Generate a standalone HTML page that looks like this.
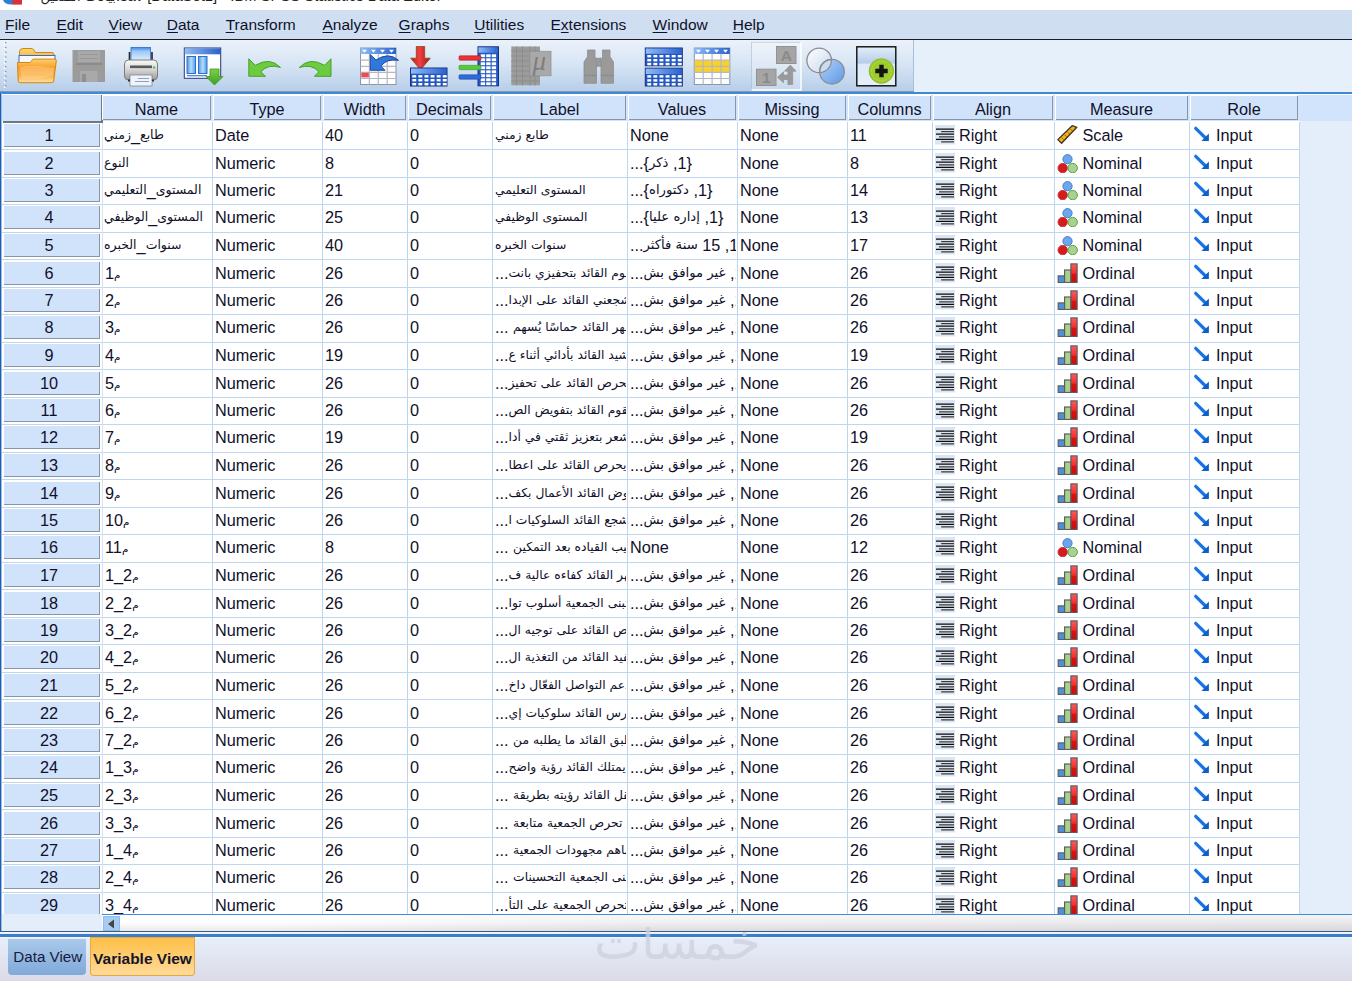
<!DOCTYPE html>
<html lang="en">
<head>
<meta charset="utf-8">
<title>IBM SPSS Statistics Data Editor</title>
<style>
html,body{margin:0;padding:0;}
body{width:1352px;height:981px;overflow:hidden;position:relative;background:#e4eefb;font-family:"Liberation Sans","DejaVu Sans",sans-serif;font-size:16.25px;color:#10102a;}
.abs{position:absolute;}
#title{position:absolute;left:0;top:0;width:1352px;height:10px;background:#fff;overflow:hidden;}
#title>span{position:absolute;left:31px;top:-13px;transform:translateY(-.4px);font-size:14.7px;line-height:17px;color:#000;white-space:nowrap;}
#title .ta{font-family:"DejaVu Sans",sans-serif;font-size:14.3px;position:static;}
#menu{position:absolute;left:0;top:10px;width:1352px;height:29px;background:#cfdff1;}
#menu span{position:absolute;top:5px;font-size:15.5px;line-height:20px;color:#10102a;white-space:nowrap;}
#menu u{text-decoration:underline;text-underline-offset:2px;}
#mline{position:absolute;left:0;top:38.5px;width:1352px;height:1.5px;background:#1c1c24;}
#tb{position:absolute;left:0;top:40px;width:913px;height:51px;background:linear-gradient(#ebf2fa,#d6e4f4 50%,#b7cee9);border-right:1px solid #a9bfd9;}
#tbr{position:absolute;left:914px;top:40px;width:438px;height:52px;background:#e6f0fb;}
#tbl1{position:absolute;left:0;top:91px;width:914px;height:1px;background:#8599b0;}
#tbl2{position:absolute;left:0;top:91.700px;width:1352px;height:2.200px;background:#3f87d8;}
#lbar{position:absolute;left:0;top:93px;width:1px;box-shadow:1px 0 0 #9dbde6;height:842px;background:#1d5fae;}
#gridbg{position:absolute;left:2px;top:94px;width:1298px;height:821px;background:#fff;}
#hband{position:absolute;left:2px;top:94px;width:1350px;height:27px;background:#d2e4fb;border-top:1px solid #fff;box-sizing:border-box;}
#corner{position:absolute;left:3px;top:95px;width:98px;height:26px;background:#d0e3fb;border-right:2px solid #6d7884;border-bottom:2px solid #6d7884;box-sizing:content-box;}
.hc{position:absolute;top:95px;height:25px;line-height:28px;text-align:center;background:#d0e3fb;box-shadow:inset 1px 1px 0 #fff, inset -1px -1px 0 #8795a5;font-size:16.25px;}
.row{position:absolute;left:0;width:1352px;}
.rh{position:absolute;left:3px;top:1px;width:97px;padding-right:5px;box-sizing:border-box;text-align:center;background:#d0e3fb;box-shadow:inset 1px 1px 0 #fff, inset -1px -1px 0 #8795a5;}
.c{position:absolute;top:0;height:100%;line-height:27px;white-space:nowrap;overflow:hidden;padding-left:2px;box-sizing:border-box;}
.ar{font-family:"DejaVu Sans",sans-serif;font-size:12.3px;position:relative;top:-2px;}
.nm .ar{font-size:12.5px;}
.vv .ar{font-size:13.2px;}
.mm{font-family:"DejaVu Sans",sans-serif;font-size:10.5px;position:relative;top:-1px;}
.nn{margin-left:1px;}
.rtl{display:inline-block;direction:rtl;unicode-bidi:isolate;white-space:nowrap;}
.hl{position:absolute;left:2px;width:1298px;height:1px;background:#bfd6f0;}
.vl{position:absolute;top:122px;width:1px;height:793px;background:#bfd6f0;}
.ic{position:absolute;}
.al{left:2px;top:3px;}
.t2{position:absolute;left:26px;}
.ms{left:1px;top:3px;}
.t3{position:absolute;left:27.5px;}
.rl{left:2px;top:4px;}
.t4{position:absolute;left:26px;}
#hsrow{position:absolute;left:2px;top:914px;width:1350px;height:19px;background:#e4eefb;}
#hstrack{position:absolute;left:102px;top:914px;width:1250px;height:17px;background:linear-gradient(rgba(255,255,255,.55),rgba(255,255,255,0) 45%,rgba(120,120,135,.16)),linear-gradient(to right,#fff 0,#fff 14%,#f1f1f3 40%,#e9e9ec 100%);border-top:1.5px solid #3d8be0;box-sizing:border-box;}
#hsbtn{position:absolute;left:103px;top:916px;width:17px;height:15px;background:#a8cbf2;box-shadow:inset 0 0 0 1px #8fbcf0;}
#bl1{position:absolute;left:0;top:931px;width:1352px;height:3px;background:linear-gradient(#3e5a78 0,#3e5a78 36%,#f4f8fd 37%,#e4eefa 100%);}
#bl2{position:absolute;left:0;top:934px;width:1352px;height:4px;background:linear-gradient(#3a7dca 0,#3a7dca 72%,#f2f6fc 73%);}
#bottom{position:absolute;left:0;top:938px;width:1352px;height:43px;background:linear-gradient(#e7eef9,#e2e6f2 40%,#dbdbe7);}
#tab1{position:absolute;left:7.500px;top:939px;width:78.500px;height:36px;border-radius:0 0 4px 4px;background:linear-gradient(#aac9ea,#7faad8);font-size:15.200px;line-height:36px;text-align:center;color:#1a1a40;padding-left:2px;box-sizing:border-box;}
#tab2{position:absolute;left:90px;top:937px;width:105px;height:39px;border-radius:0 0 4px 4px;background:linear-gradient(#ffbe45,#ffdb9b);font-size:15.5px;font-weight:bold;line-height:43px;text-align:center;color:#15152a;box-shadow:inset 0 0 0 1px #e9a83a;}
#wmc{position:absolute;left:580px;top:927px;width:200px;height:54px;overflow:hidden;}
#wm{position:absolute;left:14px;top:-15px;width:164px;text-align:center;font-family:"DejaVu Sans",sans-serif;font-size:50px;line-height:60px;font-weight:normal;color:#cdd0de;opacity:.75;white-space:nowrap;}
</style>
</head>
<body>
<svg width="0" height="0" style="position:absolute">
<defs>
<linearGradient id="gOrd" x1="0" y1="0" x2="0" y2="1"><stop offset="0" stop-color="#ff5a5a"/><stop offset=".5" stop-color="#ee3030"/><stop offset=".55" stop-color="#d81414"/><stop offset="1" stop-color="#cc0c0c"/></linearGradient>
<g id="i-al"><rect x="0" y="0" width="20" height="19.5" fill="#dce6f3"/><g stroke-width="1.25"><path d="M1 4.1H19M1 9.200H19M1 14.300H19" stroke="#0a0a0a"/><path d="M6.200 6.650H19M4 11.750H19M6.200 16.850H19" stroke="#3a3a3a"/></g></g>
<g id="i-scale"><path d="M1.800 14.600L16.200 .700L20.800 2.300L5.600 18.300z" fill="#f2b21e" stroke="#3a3226" stroke-width="1.300" stroke-linejoin="round"/><path d="M5.500 12.500l2 2M8.500 9.700l2 2M11.500 6.900l2 2M14.500 4.100l2 2" stroke="#7a5a10" stroke-width=".9"/></g>
<g id="i-nominal"><circle cx="11.500" cy="6.200" r="4.600" fill="#6fa6ea" stroke="#3f7fd4" stroke-width="1"/><circle cx="6.700" cy="15.100" r="4.700" fill="#d81a1e" stroke="#c03a3a" stroke-width="1"/><circle cx="16.700" cy="15.100" r="4.700" fill="#a9d192" stroke="#58a23a" stroke-width="1"/></g>
<g id="i-ordinal"><rect x="2.200" y="12.900" width="6.600" height="6.600" fill="#4c92da" stroke="#5e5e62" stroke-width="1.200"/><rect x="8.600" y="7" width="6.400" height="12.500" fill="#a9d18a" stroke="#5e5e62" stroke-width="1.200"/><rect x="14.900" y=".900" width="6.200" height="18.600" fill="url(#gOrd)" stroke="#5e5e62" stroke-width="1.200"/></g>
<g id="i-in"><path d="M3.700 2.300L12.500 11" stroke="#1874e6" stroke-width="3.200" stroke-linecap="round"/><path d="M16.900 7.600V15.100H9.400z" fill="#0f5fc4"/></g>
</defs>
</svg>
<div id="title"><svg width="24" height="6" viewBox="0 0 24 6" style="position:absolute;left:0;top:0"><path d="M3 0Q5 5 13 4.500V0z" fill="#2d7fd0"/><rect x="12.500" y="0" width="9.500" height="4.600" fill="#d8303c"/></svg><svg width="600" height="10" viewBox="0 0 600 10" style="position:absolute;left:0;top:0"><text x="116" y="0.600" text-anchor="end" font-family="DejaVu Sans, sans-serif" font-size="13" fill="#222">بيانات التمكين</text><text x="116" y="0.600" font-family="Liberation Sans, sans-serif" font-size="14.800" fill="#222">.sav [DataSet1] - IBM SPSS Statistics Data Editor</text></svg></div>
<div id="menu">
<span style="left:5.1px"><u>F</u>ile</span>
<span style="left:56.4px"><u>E</u>dit</span>
<span style="left:108.6px"><u>V</u>iew</span>
<span style="left:166.7px"><u>D</u>ata</span>
<span style="left:225.7px"><u>T</u>ransform</span>
<span style="left:322.5px"><u>A</u>nalyze</span>
<span style="left:398.6px"><u>G</u>raphs</span>
<span style="left:474.2px"><u>U</u>tilities</span>
<span style="left:550.5px">E<u>x</u>tensions</span>
<span style="left:652.6px"><u>W</u>indow</span>
<span style="left:732.8px"><u>H</u>elp</span>
</div>
<div id="mline"></div>
<div id="tb"></div>
<!--TB-->
<svg id="tbsvg" width="914" height="52" viewBox="0 40 914 52" style="position:absolute;left:0;top:40px">
<defs>
<linearGradient id="gFold" x1="0" y1="0" x2="0" y2="1"><stop offset="0" stop-color="#ffcf72"/><stop offset=".35" stop-color="#f9a02a"/><stop offset=".7" stop-color="#fbb040"/><stop offset="1" stop-color="#ffe2a4"/></linearGradient>
<linearGradient id="gFoldB" x1="0" y1="0" x2="0" y2="1"><stop offset="0" stop-color="#ffd873"/><stop offset="1" stop-color="#f2a224"/></linearGradient>
<linearGradient id="gHdr" x1="0" y1="0" x2="1" y2="0"><stop offset="0" stop-color="#8fbdf6"/><stop offset="1" stop-color="#2a62cc"/></linearGradient>
<linearGradient id="gHdr2" x1="0" y1="0" x2="0" y2="1"><stop offset="0" stop-color="#2a62d0"/><stop offset="1" stop-color="#8cbcf8"/></linearGradient>
<linearGradient id="gPan" x1="0" y1="0" x2="1" y2="0"><stop offset="0" stop-color="#4f9ae8"/><stop offset=".5" stop-color="#b5dcf8"/><stop offset="1" stop-color="#4f9ae8"/></linearGradient>
<linearGradient id="gGreen" x1="0" y1="0" x2="0" y2="1"><stop offset="0" stop-color="#7ed04a"/><stop offset="1" stop-color="#3f9e22"/></linearGradient>
<linearGradient id="gRed" x1="0" y1="0" x2="1" y2="0"><stop offset="0" stop-color="#b81c1c"/><stop offset=".45" stop-color="#f04040"/><stop offset="1" stop-color="#a41414"/></linearGradient>
<linearGradient id="gPrn" x1="0" y1="0" x2="0" y2="1"><stop offset="0" stop-color="#fafafa"/><stop offset=".5" stop-color="#d4d4d4"/><stop offset="1" stop-color="#9a9a9a"/></linearGradient>
<linearGradient id="gPap" x1="0" y1="0" x2="0" y2="1"><stop offset="0" stop-color="#3f8be8"/><stop offset=".25" stop-color="#9cc8f6"/><stop offset="1" stop-color="#eef6fe"/></linearGradient>
<linearGradient id="gC1" x1="0" y1="0" x2="1" y2="1"><stop offset="0" stop-color="#ffffff"/><stop offset="1" stop-color="#c4d8f0"/></linearGradient>
<linearGradient id="gC2" x1="0" y1="0" x2="1" y2="1"><stop offset="0" stop-color="#b4d2f6"/><stop offset="1" stop-color="#5c98e8"/></linearGradient>
<linearGradient id="gBox" x1="0" y1="0" x2="0" y2="1"><stop offset="0" stop-color="#e4eefa"/><stop offset=".42" stop-color="#b4cdea"/><stop offset=".44" stop-color="#dde9f8"/><stop offset="1" stop-color="#e6f0fb"/></linearGradient>
</defs>
<!-- grip -->
<g fill="#8c9cb0">
<rect x="5" y="42" width="1.5" height="1.5"/><rect x="5" y="46.8" width="1.5" height="1.5"/><rect x="5" y="51.6" width="1.5" height="1.5"/><rect x="5" y="56.4" width="1.5" height="1.5"/><rect x="5" y="61.2" width="1.5" height="1.5"/><rect x="5" y="66" width="1.5" height="1.5"/><rect x="5" y="70.8" width="1.5" height="1.5"/><rect x="5" y="75.6" width="1.5" height="1.5"/><rect x="5" y="80.4" width="1.5" height="1.5"/><rect x="5" y="85.2" width="1.5" height="1.5"/>
</g>
<g fill="#fff">
<rect x="4" y="43.3" width="1.5" height="1.5"/><rect x="4" y="48.1" width="1.5" height="1.5"/><rect x="4" y="52.9" width="1.5" height="1.5"/><rect x="4" y="57.7" width="1.5" height="1.5"/><rect x="4" y="62.5" width="1.5" height="1.5"/><rect x="4" y="67.3" width="1.5" height="1.5"/><rect x="4" y="72.1" width="1.5" height="1.5"/><rect x="4" y="76.9" width="1.5" height="1.5"/><rect x="4" y="81.7" width="1.5" height="1.5"/><rect x="4" y="86.5" width="1.5" height="1.5"/>
</g>
<!-- 1 folder -->
<g>
<path d="M19.5 62V52q0-3.5 3.5-3.5h8q2 0 3 1.6l1.4 2.4H52q2 0 2 2V62z" fill="url(#gFoldB)" stroke="#d2860f" stroke-width="1"/>
<rect x="19" y="55.5" width="36" height="8" fill="#f4f9ff" stroke="#2f6fd6" stroke-width="1"/>
<path d="M17.5 62.5h12.5l3.2-3.4h21.5q1.8 0 1.6 1.8l-2.6 20q-.3 1.8-2 1.800h-31.500q-1.700 0-2-1.800z" fill="url(#gFold)" stroke="#d2860f" stroke-width="1"/>
<path d="M20 67q14-3 34 1l-1.500 8q-16 4-31 2z" fill="#fff" opacity=".22"/>
</g>
<!-- 2 floppy -->
<g>
<rect x="72.500" y="50" width="32.500" height="32" fill="#9b9b9b"/>
<rect x="78" y="51" width="22" height="11" fill="#a8a8a8"/>
<path d="M80 54.500h18M80 58.500h18" stroke="#979797" stroke-width="1"/>
<rect x="76" y="63.300" width="26" height="1.400" fill="#858585"/>
<rect x="80" y="71" width="17.500" height="11" fill="#a9a9a9"/>
<rect x="82" y="74" width="4" height="8" fill="#8f8f8f"/>
</g>
<!-- 3 printer -->
<g>
<rect x="131" y="47.500" width="19.500" height="15" fill="url(#gPap)" stroke="#2c6cd0" stroke-width=".8"/>
<path d="M129.500 52v9M152 52v9" stroke="#222" stroke-width="1.600"/>
<rect x="124.500" y="60" width="33" height="20" rx="4" fill="url(#gPrn)" stroke="#7c7c7c" stroke-width="1"/>
<rect x="130" y="65.500" width="22" height="2.600" fill="#5a5a5a"/>
<rect x="153" y="66.500" width="2.200" height="2" fill="#4cc040"/>
<rect x="130" y="75" width="22" height="11" fill="#eef4fd" stroke="#808890" stroke-width=".8"/>
<path d="M138 78.500h11M135 81.500h14" stroke="#90a0b8" stroke-width="1"/>
<path d="M128 80.500h2M152 80.500h2" stroke="#333" stroke-width="2"/>
</g>
<!-- 4 dialog recall -->
<g>
<rect x="184.300" y="48" width="36.400" height="30.300" fill="#fff" stroke="#27357a" stroke-width="1"/>
<rect x="184.800" y="48.500" width="35.400" height="5.800" fill="url(#gHdr)"/>
<rect x="187" y="56.500" width="8.500" height="17" fill="url(#gPan)" stroke="#2c6ed4" stroke-width="1"/>
<rect x="198.500" y="56.500" width="8.500" height="17" fill="url(#gPan)" stroke="#2c6ed4" stroke-width="1"/>
<path d="M187 75.700h20" stroke="#3c7be0" stroke-width="1.200"/>
<path d="M210 69h9v7.500h4l-8.500 8.500-8.500-8.500h4z" fill="url(#gGreen)" stroke="#3c9420" stroke-width=".8"/>
</g>
<!-- 5 undo -->
<path d="M248.800 58.800V76.300H265.500L260.800 71.800Q268.500 63.500 280.500 67.500Q270 56.500 255.300 65.300Z" fill="#6ccb3e" stroke="#3f9a22" stroke-width=".9"/>
<!-- 6 redo -->
<path d="M331 58.800V76.300H314.300L319 71.800Q311.300 63.500 299.300 67.500Q309.800 56.500 324.500 65.300Z" fill="#6ccb3e" stroke="#3f9a22" stroke-width=".9"/>
<!-- 7 goto case -->
<g>
<rect x="360.500" y="48" width="35.500" height="36.500" fill="#fdfdfe" stroke="#8a93b0" stroke-width="1"/>
<rect x="360.500" y="48" width="35.500" height="6" fill="url(#gHdr)"/>
<path d="M362 49.800h5l-2.500 3zM371 49.800h5l-2.500 3zM380 49.800h5l-2.500 3zM389 49.800h5l-2.500 3z" fill="#fff"/>
<path d="M360.500 60.200h35.500M360.500 66.300h35.500M360.500 72.400h35.500M360.500 78.500h35.500M369.400 54v30.500M378.300 54v30.500M387.200 54v30.500" stroke="#b4b8c4" stroke-width="1.200" fill="none"/>
<rect x="361.300" y="72.800" width="7.500" height="4.600" fill="#f04a50"/>
<path d="M370.300 54.500V70.300H385L381 66.300Q386 58.500 398.500 60.300Q388.500 51.500 376 60Z" fill="#2f78dc" stroke="#1c3c98" stroke-width=".9"/>
</g>
<!-- 8 goto variable -->
<g>
<path d="M416.300 46.500h8.400v11.700h5.600l-9.800 11.600-9.800-11.600h5.600z" fill="url(#gRed)" stroke="#8c4a14" stroke-width=".8"/>
<rect x="410.500" y="68" width="36.500" height="18" fill="#2358c4" stroke="#1a2f80" stroke-width="1"/>
<rect x="411" y="68.500" width="35.500" height="5.200" fill="url(#gHdr)"/>
<g fill="#fff"><rect x="412.3" y="75.1" width="3.9" height="2.4"/><rect x="418.4" y="75.1" width="3.9" height="2.4"/><rect x="424.5" y="75.1" width="3.9" height="2.4"/><rect x="430.6" y="75.1" width="3.9" height="2.4"/><rect x="436.7" y="75.1" width="3.9" height="2.4"/><rect x="442.8" y="75.1" width="3.9" height="2.4"/><rect x="412.3" y="79.0" width="3.9" height="2.4"/><rect x="418.4" y="79.0" width="3.9" height="2.4"/><rect x="424.5" y="79.0" width="3.9" height="2.4"/><rect x="430.6" y="79.0" width="3.9" height="2.4"/><rect x="436.7" y="79.0" width="3.9" height="2.4"/><rect x="442.8" y="79.0" width="3.9" height="2.4"/><rect x="412.3" y="83.0" width="3.9" height="2.4"/><rect x="418.4" y="83.0" width="3.9" height="2.4"/><rect x="424.5" y="83.0" width="3.9" height="2.4"/><rect x="430.6" y="83.0" width="3.9" height="2.4"/><rect x="436.7" y="83.0" width="3.9" height="2.4"/><rect x="442.8" y="83.0" width="3.9" height="2.4"/></g>
</g>
<!-- 9 variables -->
<g>
<rect x="478" y="46.800" width="20.500" height="39" fill="#2358c4" stroke="#1a2f80" stroke-width="1"/>
<rect x="478.500" y="47.300" width="19.500" height="5.400" fill="url(#gHdr)"/>
<g fill="#fff">
<rect x="480.7" y="54.3" width="4.4" height="2.9"/><rect x="486.2" y="54.3" width="4.4" height="2.9"/><rect x="491.7" y="54.3" width="4.4" height="2.9"/>
<rect x="480.7" y="58.3" width="4.4" height="2.9"/><rect x="486.2" y="58.3" width="4.4" height="2.9"/><rect x="491.7" y="58.3" width="4.4" height="2.9"/>
<rect x="480.7" y="62.3" width="4.4" height="2.9"/><rect x="486.2" y="62.3" width="4.4" height="2.9"/><rect x="491.7" y="62.3" width="4.4" height="2.9"/>
<rect x="480.7" y="66.3" width="4.4" height="2.9"/><rect x="486.2" y="66.3" width="4.4" height="2.9"/><rect x="491.7" y="66.3" width="4.4" height="2.9"/>
<rect x="480.7" y="70.3" width="4.4" height="2.9"/><rect x="486.2" y="70.3" width="4.4" height="2.9"/><rect x="491.7" y="70.3" width="4.4" height="2.9"/>
<rect x="480.7" y="74.3" width="4.4" height="2.9"/><rect x="486.2" y="74.3" width="4.4" height="2.9"/><rect x="491.7" y="74.3" width="4.4" height="2.9"/>
<rect x="480.7" y="78.3" width="4.4" height="2.9"/><rect x="486.2" y="78.3" width="4.4" height="2.9"/><rect x="491.7" y="78.3" width="4.4" height="2.9"/>
<rect x="480.7" y="82.3" width="4.4" height="2.9"/><rect x="486.2" y="82.3" width="4.4" height="2.9"/><rect x="491.7" y="82.3" width="4.4" height="2.9"/>
</g>
<rect x="459" y="55.800" width="22" height="4.400" rx="1" fill="#e43434" stroke="#b41c1c" stroke-width=".6"/>
<rect x="459" y="65.300" width="22" height="4.400" rx="1" fill="#58c83c" stroke="#3c9a24" stroke-width=".6"/>
<rect x="459" y="74.800" width="22" height="4.400" rx="1" fill="#2c6cd8" stroke="#1c48a8" stroke-width=".6"/>
</g>
<!-- 10 stats (disabled) -->
<g>
<rect x="511.300" y="46.500" width="28.700" height="38.800" fill="#9c9c9c"/>
<path d="M511.300 51h28.700M511.300 56h28.700M511.300 61h28.700M511.300 66h28.700M511.300 71h28.700M511.300 76h28.700M511.300 81h28.700M516.500 46.500v38.800M522.500 46.500v38.800M530 46.500v38.800M535 46.500v38.800" stroke="#8c8c8c" stroke-width="1" fill="none"/>
<rect x="530" y="51.300" width="21" height="24.500" fill="#a9a9a9" stroke="#949494" stroke-width=".8"/>
<text x="532.5" y="69.5" font-family="Liberation Serif, DejaVu Serif, serif" font-style="italic" font-size="27" fill="#7e7e7e">μ</text>
</g>
<!-- 11 binoculars (disabled) -->
<g fill="#9a9a9a" stroke="#8e8e8e" stroke-width=".8">
<path d="M587.500 50h7.500v6.500l1.500 5.500V83.300H584V62l3.500-5.500z"/>
<path d="M602.500 50h7.500v6.500l3.500 5.500V83.300H601V62l1.500-5.500z"/>
<rect x="596.500" y="58.200" width="4.500" height="8"/>
<path d="M584 75.500h12.500M601 75.500h12.500" stroke="#858585" stroke-width="1.400" stroke-dasharray="1.200 .8"/>
</g>
<!-- 12 split -->
<g>
<rect x="645.300" y="48" width="37" height="17.800" fill="#2358c4" stroke="#1a2f80" stroke-width="1"/>
<rect x="645.800" y="48.500" width="36" height="5.300" fill="url(#gHdr)"/>
<g fill="#fff"><rect x="647.3" y="55.0" width="3.9" height="2.4"/><rect x="653.4" y="55.0" width="3.9" height="2.4"/><rect x="659.5" y="55.0" width="3.9" height="2.4"/><rect x="665.6" y="55.0" width="3.9" height="2.4"/><rect x="671.7" y="55.0" width="3.9" height="2.4"/><rect x="677.8" y="55.0" width="3.9" height="2.4"/><rect x="647.3" y="59.0" width="3.9" height="2.4"/><rect x="653.4" y="59.0" width="3.9" height="2.4"/><rect x="659.5" y="59.0" width="3.9" height="2.4"/><rect x="665.6" y="59.0" width="3.9" height="2.4"/><rect x="671.7" y="59.0" width="3.9" height="2.4"/><rect x="677.8" y="59.0" width="3.9" height="2.4"/><rect x="647.3" y="62.9" width="3.9" height="2.4"/><rect x="653.4" y="62.9" width="3.9" height="2.4"/><rect x="659.5" y="62.9" width="3.9" height="2.4"/><rect x="665.6" y="62.9" width="3.9" height="2.4"/><rect x="671.7" y="62.9" width="3.9" height="2.4"/><rect x="677.8" y="62.9" width="3.9" height="2.4"/></g>
<rect x="645.300" y="68.200" width="37" height="17.800" fill="#2358c4" stroke="#1a2f80" stroke-width="1"/>
<rect x="645.800" y="68.700" width="36" height="5.300" fill="url(#gHdr)"/>
<g fill="#fff"><rect x="647.3" y="75.2" width="3.9" height="2.4"/><rect x="653.4" y="75.2" width="3.9" height="2.4"/><rect x="659.5" y="75.2" width="3.9" height="2.4"/><rect x="665.6" y="75.2" width="3.9" height="2.4"/><rect x="671.7" y="75.2" width="3.9" height="2.4"/><rect x="677.8" y="75.2" width="3.9" height="2.4"/><rect x="647.3" y="79.2" width="3.9" height="2.4"/><rect x="653.4" y="79.2" width="3.9" height="2.4"/><rect x="659.5" y="79.2" width="3.9" height="2.4"/><rect x="665.6" y="79.2" width="3.9" height="2.4"/><rect x="671.7" y="79.2" width="3.9" height="2.4"/><rect x="677.8" y="79.2" width="3.9" height="2.4"/><rect x="647.3" y="83.1" width="3.9" height="2.4"/><rect x="653.4" y="83.1" width="3.9" height="2.4"/><rect x="659.5" y="83.1" width="3.9" height="2.4"/><rect x="665.6" y="83.1" width="3.9" height="2.4"/><rect x="671.7" y="83.1" width="3.9" height="2.4"/><rect x="677.8" y="83.1" width="3.9" height="2.4"/></g>
</g>
<!-- 13 select cases -->
<g>
<rect x="694.300" y="48" width="35.500" height="36.500" fill="#fdfdfe" stroke="#8a93b0" stroke-width="1"/>
<rect x="694.300" y="48" width="35.500" height="6" fill="url(#gHdr)"/>
<path d="M696 49.800h5l-2.500 3zM705 49.800h5l-2.500 3zM714 49.800h5l-2.500 3zM723 49.800h5l-2.500 3z" fill="#fff"/>
<rect x="694.800" y="60.300" width="34.500" height="11.800" fill="#f8d226"/>
<path d="M694.300 60.200h35.500M694.300 66.300h35.500M694.300 72.400h35.500M694.300 78.500h35.500M703.200 54v30.500M712.100 54v30.500M721 54v30.500" stroke="#b4b8c4" stroke-width="1.200" fill="none"/>
</g>
<!-- 14 value labels (pressed) -->
<g>
<rect x="751.500" y="42" width="49.500" height="48.300" fill="#fff" fill-opacity=".22"/>
<path d="M751.500 90.300V42.300H801" fill="none" stroke="#a4b2c6" stroke-width="1" stroke-dasharray="1 1"/>
<path d="M751.500 90h49.500V42" fill="none" stroke="#fff" stroke-width="1.400"/>
<rect x="776.500" y="46.500" width="19.500" height="17" fill="#a5a5a5" stroke="#929292" stroke-width="1"/>
<text x="786.300" y="61" text-anchor="middle" font-family="Liberation Sans, sans-serif" font-weight="bold" font-size="15.500" fill="#8a8a8a">A</text>
<rect x="756.500" y="69.200" width="19.500" height="16.300" fill="#a5a5a5" stroke="#929292" stroke-width="1"/>
<text x="766.300" y="83.300" text-anchor="middle" font-family="Liberation Sans, sans-serif" font-weight="bold" font-size="15.500" fill="#8a8a8a">1</text>
<path d="M790.300 65l5.800 6.200h-3.400v13.300h-4.800v-5h-4.400v3.300l-6-5.500 6-5.500v3.300h4.400v-3.900h-3.400z" fill="#9a9a9a" stroke="#8c8c8c" stroke-width=".6"/>
</g>
<!-- 15 circles -->
<g>
<circle cx="819.200" cy="60.400" r="12.300" fill="url(#gC1)" stroke="#8c8c90" stroke-width="1.300"/>
<circle cx="832" cy="71.700" r="12.300" fill="url(#gC2)" stroke="#8c8c90" stroke-width="1.300"/>
<path d="M819.900 68.600A12.300 12.300 0 0 1 831.300 59.400" fill="none" stroke="#8c8c90" stroke-width="1.300"/>
<path d="M831.300 59.400A12.300 12.300 0 0 1 819.900 72.700 12.300 12.300 0 0 1 831.300 59.400z" fill="#c8dcf4" stroke="#8c8c90" stroke-width="1.300"/>
</g>
<!-- 16 plus box -->
<g>
<rect x="856.800" y="46.800" width="39" height="39" fill="url(#gBox)" stroke="#0c0c0c" stroke-width="1.400"/>
<circle cx="881.400" cy="71" r="12.300" fill="#9ccc30" stroke="#8cbc28" stroke-width="1"/>
<circle cx="881.400" cy="71" r="9.800" fill="none" stroke="#d8d840" stroke-width="1" stroke-dasharray="1 1.300"/>
<path d="M879.300 64.800h4.400v4h4v4.400h-4v4h-4.400v-4h-4v-4.400h4z" fill="#141414"/>
</g>
</svg>

<!--/TB-->
<div id="tbr"></div>
<div id="tbl2"></div><div id="tbl1"></div>
<div id="gridbg"></div>
<div id="hband"></div>
<div id="corner"></div>
<div id="lbar"></div>

<div class="hc" style="left:102px;width:109px">Name</div>
<div class="hc" style="left:213px;width:108px">Type</div>
<div class="hc" style="left:323px;width:83px">Width</div>
<div class="hc" style="left:408px;width:83px">Decimals</div>
<div class="hc" style="left:493px;width:133px">Label</div>
<div class="hc" style="left:628px;width:108px">Values</div>
<div class="hc" style="left:738px;width:108px">Missing</div>
<div class="hc" style="left:848px;width:83px">Columns</div>
<div class="hc" style="left:933px;width:120px">Align</div>
<div class="hc" style="left:1055px;width:133px">Measure</div>
<div class="hc" style="left:1190px;width:108px">Role</div>
<div class="row" style="top:122px;height:28px">
<div class="rh" style="height:24px;line-height:25px">1</div>
<div class="c" style="left:102px;width:109px"><span class="rtl nm"><span class="ar">طابع</span>_<span class="ar">زمني</span></span></div>
<div class="c" style="left:213px;width:108px">Date</div>
<div class="c" style="left:323px;width:83px">40</div>
<div class="c" style="left:408px;width:83px">0</div>
<div class="c" style="left:493px;width:133px"><span class="rtl"><span class="ar">طابع زمني</span></span></div>
<div class="c" style="left:628px;width:108px">None</div>
<div class="c" style="left:738px;width:108px">None</div>
<div class="c" style="left:848px;width:83px">11</div>
<div class="c" style="left:933px;width:120px"><svg class="ic al" width="20" height="19.5" viewBox="0 0 20 19.5"><use href="#i-al"/></svg><span class="t2">Right</span></div>
<div class="c" style="left:1055px;width:133px"><svg class="ic ms" width="22" height="20" viewBox="0 0 22 20"><use href="#i-scale"/></svg><span class="t3">Scale</span></div>
<div class="c" style="left:1190px;width:108px"><svg class="ic rl" width="18" height="16" viewBox="0 0 18 16"><use href="#i-in"/></svg><span class="t4">Input</span></div>
</div>
<div class="row" style="top:150px;height:27px">
<div class="rh" style="height:24px;line-height:25px">2</div>
<div class="c" style="left:102px;width:109px"><span class="rtl nm"><span class="ar">النوع</span></span></div>
<div class="c" style="left:213px;width:108px">Numeric</div>
<div class="c" style="left:323px;width:83px">8</div>
<div class="c" style="left:408px;width:83px">0</div>
<div class="c" style="left:493px;width:133px"></div>
<div class="c" style="left:628px;width:108px"><span class="rtl vv">{1, <span class="ar">ذكر</span>}...</span></div>
<div class="c" style="left:738px;width:108px">None</div>
<div class="c" style="left:848px;width:83px">8</div>
<div class="c" style="left:933px;width:120px"><svg class="ic al" width="20" height="19.5" viewBox="0 0 20 19.5"><use href="#i-al"/></svg><span class="t2">Right</span></div>
<div class="c" style="left:1055px;width:133px"><svg class="ic ms" width="22" height="20" viewBox="0 0 22 20"><use href="#i-nominal"/></svg><span class="t3">Nominal</span></div>
<div class="c" style="left:1190px;width:108px"><svg class="ic rl" width="18" height="16" viewBox="0 0 18 16"><use href="#i-in"/></svg><span class="t4">Input</span></div>
</div>
<div class="row" style="top:177px;height:27px">
<div class="rh" style="height:24px;line-height:25px">3</div>
<div class="c" style="left:102px;width:109px"><span class="rtl nm"><span class="ar">المستوى</span>_<span class="ar">التعليمي</span></span></div>
<div class="c" style="left:213px;width:108px">Numeric</div>
<div class="c" style="left:323px;width:83px">21</div>
<div class="c" style="left:408px;width:83px">0</div>
<div class="c" style="left:493px;width:133px"><span class="rtl"><span class="ar">المستوى التعليمي</span></span></div>
<div class="c" style="left:628px;width:108px"><span class="rtl vv">{1, <span class="ar">دكتوراه</span>}...</span></div>
<div class="c" style="left:738px;width:108px">None</div>
<div class="c" style="left:848px;width:83px">14</div>
<div class="c" style="left:933px;width:120px"><svg class="ic al" width="20" height="19.5" viewBox="0 0 20 19.5"><use href="#i-al"/></svg><span class="t2">Right</span></div>
<div class="c" style="left:1055px;width:133px"><svg class="ic ms" width="22" height="20" viewBox="0 0 22 20"><use href="#i-nominal"/></svg><span class="t3">Nominal</span></div>
<div class="c" style="left:1190px;width:108px"><svg class="ic rl" width="18" height="16" viewBox="0 0 18 16"><use href="#i-in"/></svg><span class="t4">Input</span></div>
</div>
<div class="row" style="top:204px;height:28px">
<div class="rh" style="height:24px;line-height:25px">4</div>
<div class="c" style="left:102px;width:109px"><span class="rtl nm"><span class="ar">المستوى</span>_<span class="ar">الوظيفي</span></span></div>
<div class="c" style="left:213px;width:108px">Numeric</div>
<div class="c" style="left:323px;width:83px">25</div>
<div class="c" style="left:408px;width:83px">0</div>
<div class="c" style="left:493px;width:133px"><span class="rtl"><span class="ar">المستوى الوظيفي</span></span></div>
<div class="c" style="left:628px;width:108px"><span class="rtl vv">{1, <span class="ar">إداره عليا</span>}...</span></div>
<div class="c" style="left:738px;width:108px">None</div>
<div class="c" style="left:848px;width:83px">13</div>
<div class="c" style="left:933px;width:120px"><svg class="ic al" width="20" height="19.5" viewBox="0 0 20 19.5"><use href="#i-al"/></svg><span class="t2">Right</span></div>
<div class="c" style="left:1055px;width:133px"><svg class="ic ms" width="22" height="20" viewBox="0 0 22 20"><use href="#i-nominal"/></svg><span class="t3">Nominal</span></div>
<div class="c" style="left:1190px;width:108px"><svg class="ic rl" width="18" height="16" viewBox="0 0 18 16"><use href="#i-in"/></svg><span class="t4">Input</span></div>
</div>
<div class="row" style="top:232px;height:28px">
<div class="rh" style="height:24px;line-height:25px">5</div>
<div class="c" style="left:102px;width:109px"><span class="rtl nm"><span class="ar">سنوات</span>_<span class="ar">الخبره</span></span></div>
<div class="c" style="left:213px;width:108px">Numeric</div>
<div class="c" style="left:323px;width:83px">40</div>
<div class="c" style="left:408px;width:83px">0</div>
<div class="c" style="left:493px;width:133px"><span class="rtl"><span class="ar">سنوات الخبره</span></span></div>
<div class="c" style="left:628px;width:108px"><span class="rtl vv">{1, 15 <span class="ar">سنة فأكثر</span>...</span></div>
<div class="c" style="left:738px;width:108px">None</div>
<div class="c" style="left:848px;width:83px">17</div>
<div class="c" style="left:933px;width:120px"><svg class="ic al" width="20" height="19.5" viewBox="0 0 20 19.5"><use href="#i-al"/></svg><span class="t2">Right</span></div>
<div class="c" style="left:1055px;width:133px"><svg class="ic ms" width="22" height="20" viewBox="0 0 22 20"><use href="#i-nominal"/></svg><span class="t3">Nominal</span></div>
<div class="c" style="left:1190px;width:108px"><svg class="ic rl" width="18" height="16" viewBox="0 0 18 16"><use href="#i-in"/></svg><span class="t4">Input</span></div>
</div>
<div class="row" style="top:260px;height:27px">
<div class="rh" style="height:24px;line-height:25px">6</div>
<div class="c" style="left:102px;width:109px"><span class="nn">1</span><span class="mm">م</span></div>
<div class="c" style="left:213px;width:108px">Numeric</div>
<div class="c" style="left:323px;width:83px">26</div>
<div class="c" style="left:408px;width:83px">0</div>
<div class="c" style="left:493px;width:133px"><span class="rtl"><span class="ar">يقوم القائد بتحفيزي بانت</span>...</span></div>
<div class="c" style="left:628px;width:108px"><span class="rtl vv">{1, <span class="ar">غير موافق بش</span>...</span></div>
<div class="c" style="left:738px;width:108px">None</div>
<div class="c" style="left:848px;width:83px">26</div>
<div class="c" style="left:933px;width:120px"><svg class="ic al" width="20" height="19.5" viewBox="0 0 20 19.5"><use href="#i-al"/></svg><span class="t2">Right</span></div>
<div class="c" style="left:1055px;width:133px"><svg class="ic ms" width="22" height="20" viewBox="0 0 22 20"><use href="#i-ordinal"/></svg><span class="t3">Ordinal</span></div>
<div class="c" style="left:1190px;width:108px"><svg class="ic rl" width="18" height="16" viewBox="0 0 18 16"><use href="#i-in"/></svg><span class="t4">Input</span></div>
</div>
<div class="row" style="top:287px;height:27px">
<div class="rh" style="height:24px;line-height:25px">7</div>
<div class="c" style="left:102px;width:109px"><span class="nn">2</span><span class="mm">م</span></div>
<div class="c" style="left:213px;width:108px">Numeric</div>
<div class="c" style="left:323px;width:83px">26</div>
<div class="c" style="left:408px;width:83px">0</div>
<div class="c" style="left:493px;width:133px"><span class="rtl"><span class="ar">يشجعني القائد على الإبدا</span>...</span></div>
<div class="c" style="left:628px;width:108px"><span class="rtl vv">{1, <span class="ar">غير موافق بش</span>...</span></div>
<div class="c" style="left:738px;width:108px">None</div>
<div class="c" style="left:848px;width:83px">26</div>
<div class="c" style="left:933px;width:120px"><svg class="ic al" width="20" height="19.5" viewBox="0 0 20 19.5"><use href="#i-al"/></svg><span class="t2">Right</span></div>
<div class="c" style="left:1055px;width:133px"><svg class="ic ms" width="22" height="20" viewBox="0 0 22 20"><use href="#i-ordinal"/></svg><span class="t3">Ordinal</span></div>
<div class="c" style="left:1190px;width:108px"><svg class="ic rl" width="18" height="16" viewBox="0 0 18 16"><use href="#i-in"/></svg><span class="t4">Input</span></div>
</div>
<div class="row" style="top:314px;height:28px">
<div class="rh" style="height:24px;line-height:25px">8</div>
<div class="c" style="left:102px;width:109px"><span class="nn">3</span><span class="mm">م</span></div>
<div class="c" style="left:213px;width:108px">Numeric</div>
<div class="c" style="left:323px;width:83px">26</div>
<div class="c" style="left:408px;width:83px">0</div>
<div class="c" style="left:493px;width:133px"><span class="rtl"><span class="ar">يظهر القائد حماسًا يُسهم</span> ...</span></div>
<div class="c" style="left:628px;width:108px"><span class="rtl vv">{1, <span class="ar">غير موافق بش</span>...</span></div>
<div class="c" style="left:738px;width:108px">None</div>
<div class="c" style="left:848px;width:83px">26</div>
<div class="c" style="left:933px;width:120px"><svg class="ic al" width="20" height="19.5" viewBox="0 0 20 19.5"><use href="#i-al"/></svg><span class="t2">Right</span></div>
<div class="c" style="left:1055px;width:133px"><svg class="ic ms" width="22" height="20" viewBox="0 0 22 20"><use href="#i-ordinal"/></svg><span class="t3">Ordinal</span></div>
<div class="c" style="left:1190px;width:108px"><svg class="ic rl" width="18" height="16" viewBox="0 0 18 16"><use href="#i-in"/></svg><span class="t4">Input</span></div>
</div>
<div class="row" style="top:342px;height:28px">
<div class="rh" style="height:24px;line-height:25px">9</div>
<div class="c" style="left:102px;width:109px"><span class="nn">4</span><span class="mm">م</span></div>
<div class="c" style="left:213px;width:108px">Numeric</div>
<div class="c" style="left:323px;width:83px">19</div>
<div class="c" style="left:408px;width:83px">0</div>
<div class="c" style="left:493px;width:133px"><span class="rtl"><span class="ar">يشيد القائد بأدائي أثناء ع</span>...</span></div>
<div class="c" style="left:628px;width:108px"><span class="rtl vv">{1, <span class="ar">غير موافق بش</span>...</span></div>
<div class="c" style="left:738px;width:108px">None</div>
<div class="c" style="left:848px;width:83px">19</div>
<div class="c" style="left:933px;width:120px"><svg class="ic al" width="20" height="19.5" viewBox="0 0 20 19.5"><use href="#i-al"/></svg><span class="t2">Right</span></div>
<div class="c" style="left:1055px;width:133px"><svg class="ic ms" width="22" height="20" viewBox="0 0 22 20"><use href="#i-ordinal"/></svg><span class="t3">Ordinal</span></div>
<div class="c" style="left:1190px;width:108px"><svg class="ic rl" width="18" height="16" viewBox="0 0 18 16"><use href="#i-in"/></svg><span class="t4">Input</span></div>
</div>
<div class="row" style="top:370px;height:27px">
<div class="rh" style="height:24px;line-height:25px">10</div>
<div class="c" style="left:102px;width:109px"><span class="nn">5</span><span class="mm">م</span></div>
<div class="c" style="left:213px;width:108px">Numeric</div>
<div class="c" style="left:323px;width:83px">26</div>
<div class="c" style="left:408px;width:83px">0</div>
<div class="c" style="left:493px;width:133px"><span class="rtl"><span class="ar">يحرص القائد على تحفيز</span>...</span></div>
<div class="c" style="left:628px;width:108px"><span class="rtl vv">{1, <span class="ar">غير موافق بش</span>...</span></div>
<div class="c" style="left:738px;width:108px">None</div>
<div class="c" style="left:848px;width:83px">26</div>
<div class="c" style="left:933px;width:120px"><svg class="ic al" width="20" height="19.5" viewBox="0 0 20 19.5"><use href="#i-al"/></svg><span class="t2">Right</span></div>
<div class="c" style="left:1055px;width:133px"><svg class="ic ms" width="22" height="20" viewBox="0 0 22 20"><use href="#i-ordinal"/></svg><span class="t3">Ordinal</span></div>
<div class="c" style="left:1190px;width:108px"><svg class="ic rl" width="18" height="16" viewBox="0 0 18 16"><use href="#i-in"/></svg><span class="t4">Input</span></div>
</div>
<div class="row" style="top:397px;height:27px">
<div class="rh" style="height:24px;line-height:25px">11</div>
<div class="c" style="left:102px;width:109px"><span class="nn">6</span><span class="mm">م</span></div>
<div class="c" style="left:213px;width:108px">Numeric</div>
<div class="c" style="left:323px;width:83px">26</div>
<div class="c" style="left:408px;width:83px">0</div>
<div class="c" style="left:493px;width:133px"><span class="rtl"><span class="ar">يقوم القائد بتفويض الص</span>...</span></div>
<div class="c" style="left:628px;width:108px"><span class="rtl vv">{1, <span class="ar">غير موافق بش</span>...</span></div>
<div class="c" style="left:738px;width:108px">None</div>
<div class="c" style="left:848px;width:83px">26</div>
<div class="c" style="left:933px;width:120px"><svg class="ic al" width="20" height="19.5" viewBox="0 0 20 19.5"><use href="#i-al"/></svg><span class="t2">Right</span></div>
<div class="c" style="left:1055px;width:133px"><svg class="ic ms" width="22" height="20" viewBox="0 0 22 20"><use href="#i-ordinal"/></svg><span class="t3">Ordinal</span></div>
<div class="c" style="left:1190px;width:108px"><svg class="ic rl" width="18" height="16" viewBox="0 0 18 16"><use href="#i-in"/></svg><span class="t4">Input</span></div>
</div>
<div class="row" style="top:424px;height:28px">
<div class="rh" style="height:24px;line-height:25px">12</div>
<div class="c" style="left:102px;width:109px"><span class="nn">7</span><span class="mm">م</span></div>
<div class="c" style="left:213px;width:108px">Numeric</div>
<div class="c" style="left:323px;width:83px">19</div>
<div class="c" style="left:408px;width:83px">0</div>
<div class="c" style="left:493px;width:133px"><span class="rtl"><span class="ar">أشعر بتعزيز ثقتي في أدا</span>...</span></div>
<div class="c" style="left:628px;width:108px"><span class="rtl vv">{1, <span class="ar">غير موافق بش</span>...</span></div>
<div class="c" style="left:738px;width:108px">None</div>
<div class="c" style="left:848px;width:83px">19</div>
<div class="c" style="left:933px;width:120px"><svg class="ic al" width="20" height="19.5" viewBox="0 0 20 19.5"><use href="#i-al"/></svg><span class="t2">Right</span></div>
<div class="c" style="left:1055px;width:133px"><svg class="ic ms" width="22" height="20" viewBox="0 0 22 20"><use href="#i-ordinal"/></svg><span class="t3">Ordinal</span></div>
<div class="c" style="left:1190px;width:108px"><svg class="ic rl" width="18" height="16" viewBox="0 0 18 16"><use href="#i-in"/></svg><span class="t4">Input</span></div>
</div>
<div class="row" style="top:452px;height:28px">
<div class="rh" style="height:24px;line-height:25px">13</div>
<div class="c" style="left:102px;width:109px"><span class="nn">8</span><span class="mm">م</span></div>
<div class="c" style="left:213px;width:108px">Numeric</div>
<div class="c" style="left:323px;width:83px">26</div>
<div class="c" style="left:408px;width:83px">0</div>
<div class="c" style="left:493px;width:133px"><span class="rtl"><span class="ar">يحرص القائد على اعطا</span>...</span></div>
<div class="c" style="left:628px;width:108px"><span class="rtl vv">{1, <span class="ar">غير موافق بش</span>...</span></div>
<div class="c" style="left:738px;width:108px">None</div>
<div class="c" style="left:848px;width:83px">26</div>
<div class="c" style="left:933px;width:120px"><svg class="ic al" width="20" height="19.5" viewBox="0 0 20 19.5"><use href="#i-al"/></svg><span class="t2">Right</span></div>
<div class="c" style="left:1055px;width:133px"><svg class="ic ms" width="22" height="20" viewBox="0 0 22 20"><use href="#i-ordinal"/></svg><span class="t3">Ordinal</span></div>
<div class="c" style="left:1190px;width:108px"><svg class="ic rl" width="18" height="16" viewBox="0 0 18 16"><use href="#i-in"/></svg><span class="t4">Input</span></div>
</div>
<div class="row" style="top:480px;height:27px">
<div class="rh" style="height:24px;line-height:25px">14</div>
<div class="c" style="left:102px;width:109px"><span class="nn">9</span><span class="mm">م</span></div>
<div class="c" style="left:213px;width:108px">Numeric</div>
<div class="c" style="left:323px;width:83px">26</div>
<div class="c" style="left:408px;width:83px">0</div>
<div class="c" style="left:493px;width:133px"><span class="rtl"><span class="ar">يفوض القائد الأعمال بكف</span>...</span></div>
<div class="c" style="left:628px;width:108px"><span class="rtl vv">{1, <span class="ar">غير موافق بش</span>...</span></div>
<div class="c" style="left:738px;width:108px">None</div>
<div class="c" style="left:848px;width:83px">26</div>
<div class="c" style="left:933px;width:120px"><svg class="ic al" width="20" height="19.5" viewBox="0 0 20 19.5"><use href="#i-al"/></svg><span class="t2">Right</span></div>
<div class="c" style="left:1055px;width:133px"><svg class="ic ms" width="22" height="20" viewBox="0 0 22 20"><use href="#i-ordinal"/></svg><span class="t3">Ordinal</span></div>
<div class="c" style="left:1190px;width:108px"><svg class="ic rl" width="18" height="16" viewBox="0 0 18 16"><use href="#i-in"/></svg><span class="t4">Input</span></div>
</div>
<div class="row" style="top:507px;height:27px">
<div class="rh" style="height:24px;line-height:25px">15</div>
<div class="c" style="left:102px;width:109px"><span class="nn">10</span><span class="mm">م</span></div>
<div class="c" style="left:213px;width:108px">Numeric</div>
<div class="c" style="left:323px;width:83px">26</div>
<div class="c" style="left:408px;width:83px">0</div>
<div class="c" style="left:493px;width:133px"><span class="rtl"><span class="ar">يشجع القائد السلوكيات ا</span>...</span></div>
<div class="c" style="left:628px;width:108px"><span class="rtl vv">{1, <span class="ar">غير موافق بش</span>...</span></div>
<div class="c" style="left:738px;width:108px">None</div>
<div class="c" style="left:848px;width:83px">26</div>
<div class="c" style="left:933px;width:120px"><svg class="ic al" width="20" height="19.5" viewBox="0 0 20 19.5"><use href="#i-al"/></svg><span class="t2">Right</span></div>
<div class="c" style="left:1055px;width:133px"><svg class="ic ms" width="22" height="20" viewBox="0 0 22 20"><use href="#i-ordinal"/></svg><span class="t3">Ordinal</span></div>
<div class="c" style="left:1190px;width:108px"><svg class="ic rl" width="18" height="16" viewBox="0 0 18 16"><use href="#i-in"/></svg><span class="t4">Input</span></div>
</div>
<div class="row" style="top:534px;height:28px">
<div class="rh" style="height:24px;line-height:25px">16</div>
<div class="c" style="left:102px;width:109px"><span class="nn">11</span><span class="mm">م</span></div>
<div class="c" style="left:213px;width:108px">Numeric</div>
<div class="c" style="left:323px;width:83px">8</div>
<div class="c" style="left:408px;width:83px">0</div>
<div class="c" style="left:493px;width:133px"><span class="rtl"><span class="ar">ترتيب القياده بعد التمكين</span> ...</span></div>
<div class="c" style="left:628px;width:108px">None</div>
<div class="c" style="left:738px;width:108px">None</div>
<div class="c" style="left:848px;width:83px">12</div>
<div class="c" style="left:933px;width:120px"><svg class="ic al" width="20" height="19.5" viewBox="0 0 20 19.5"><use href="#i-al"/></svg><span class="t2">Right</span></div>
<div class="c" style="left:1055px;width:133px"><svg class="ic ms" width="22" height="20" viewBox="0 0 22 20"><use href="#i-nominal"/></svg><span class="t3">Nominal</span></div>
<div class="c" style="left:1190px;width:108px"><svg class="ic rl" width="18" height="16" viewBox="0 0 18 16"><use href="#i-in"/></svg><span class="t4">Input</span></div>
</div>
<div class="row" style="top:562px;height:28px">
<div class="rh" style="height:24px;line-height:25px">17</div>
<div class="c" style="left:102px;width:109px"><span class="nn">1_2</span><span class="mm">م</span></div>
<div class="c" style="left:213px;width:108px">Numeric</div>
<div class="c" style="left:323px;width:83px">26</div>
<div class="c" style="left:408px;width:83px">0</div>
<div class="c" style="left:493px;width:133px"><span class="rtl"><span class="ar">يظهر القائد كفاءه عالية ف</span>...</span></div>
<div class="c" style="left:628px;width:108px"><span class="rtl vv">{1, <span class="ar">غير موافق بش</span>...</span></div>
<div class="c" style="left:738px;width:108px">None</div>
<div class="c" style="left:848px;width:83px">26</div>
<div class="c" style="left:933px;width:120px"><svg class="ic al" width="20" height="19.5" viewBox="0 0 20 19.5"><use href="#i-al"/></svg><span class="t2">Right</span></div>
<div class="c" style="left:1055px;width:133px"><svg class="ic ms" width="22" height="20" viewBox="0 0 22 20"><use href="#i-ordinal"/></svg><span class="t3">Ordinal</span></div>
<div class="c" style="left:1190px;width:108px"><svg class="ic rl" width="18" height="16" viewBox="0 0 18 16"><use href="#i-in"/></svg><span class="t4">Input</span></div>
</div>
<div class="row" style="top:590px;height:27px">
<div class="rh" style="height:24px;line-height:25px">18</div>
<div class="c" style="left:102px;width:109px"><span class="nn">2_2</span><span class="mm">م</span></div>
<div class="c" style="left:213px;width:108px">Numeric</div>
<div class="c" style="left:323px;width:83px">26</div>
<div class="c" style="left:408px;width:83px">0</div>
<div class="c" style="left:493px;width:133px"><span class="rtl"><span class="ar">تتبنى الجمعية أسلوب توا</span>...</span></div>
<div class="c" style="left:628px;width:108px"><span class="rtl vv">{1, <span class="ar">غير موافق بش</span>...</span></div>
<div class="c" style="left:738px;width:108px">None</div>
<div class="c" style="left:848px;width:83px">26</div>
<div class="c" style="left:933px;width:120px"><svg class="ic al" width="20" height="19.5" viewBox="0 0 20 19.5"><use href="#i-al"/></svg><span class="t2">Right</span></div>
<div class="c" style="left:1055px;width:133px"><svg class="ic ms" width="22" height="20" viewBox="0 0 22 20"><use href="#i-ordinal"/></svg><span class="t3">Ordinal</span></div>
<div class="c" style="left:1190px;width:108px"><svg class="ic rl" width="18" height="16" viewBox="0 0 18 16"><use href="#i-in"/></svg><span class="t4">Input</span></div>
</div>
<div class="row" style="top:617px;height:27px">
<div class="rh" style="height:24px;line-height:25px">19</div>
<div class="c" style="left:102px;width:109px"><span class="nn">3_2</span><span class="mm">م</span></div>
<div class="c" style="left:213px;width:108px">Numeric</div>
<div class="c" style="left:323px;width:83px">26</div>
<div class="c" style="left:408px;width:83px">0</div>
<div class="c" style="left:493px;width:133px"><span class="rtl"><span class="ar">يحرص القائد على توجيه ال</span>...</span></div>
<div class="c" style="left:628px;width:108px"><span class="rtl vv">{1, <span class="ar">غير موافق بش</span>...</span></div>
<div class="c" style="left:738px;width:108px">None</div>
<div class="c" style="left:848px;width:83px">26</div>
<div class="c" style="left:933px;width:120px"><svg class="ic al" width="20" height="19.5" viewBox="0 0 20 19.5"><use href="#i-al"/></svg><span class="t2">Right</span></div>
<div class="c" style="left:1055px;width:133px"><svg class="ic ms" width="22" height="20" viewBox="0 0 22 20"><use href="#i-ordinal"/></svg><span class="t3">Ordinal</span></div>
<div class="c" style="left:1190px;width:108px"><svg class="ic rl" width="18" height="16" viewBox="0 0 18 16"><use href="#i-in"/></svg><span class="t4">Input</span></div>
</div>
<div class="row" style="top:644px;height:28px">
<div class="rh" style="height:24px;line-height:25px">20</div>
<div class="c" style="left:102px;width:109px"><span class="nn">4_2</span><span class="mm">م</span></div>
<div class="c" style="left:213px;width:108px">Numeric</div>
<div class="c" style="left:323px;width:83px">26</div>
<div class="c" style="left:408px;width:83px">0</div>
<div class="c" style="left:493px;width:133px"><span class="rtl"><span class="ar">يستفيد القائد من التغذية ال</span>...</span></div>
<div class="c" style="left:628px;width:108px"><span class="rtl vv">{1, <span class="ar">غير موافق بش</span>...</span></div>
<div class="c" style="left:738px;width:108px">None</div>
<div class="c" style="left:848px;width:83px">26</div>
<div class="c" style="left:933px;width:120px"><svg class="ic al" width="20" height="19.5" viewBox="0 0 20 19.5"><use href="#i-al"/></svg><span class="t2">Right</span></div>
<div class="c" style="left:1055px;width:133px"><svg class="ic ms" width="22" height="20" viewBox="0 0 22 20"><use href="#i-ordinal"/></svg><span class="t3">Ordinal</span></div>
<div class="c" style="left:1190px;width:108px"><svg class="ic rl" width="18" height="16" viewBox="0 0 18 16"><use href="#i-in"/></svg><span class="t4">Input</span></div>
</div>
<div class="row" style="top:672px;height:28px">
<div class="rh" style="height:24px;line-height:25px">21</div>
<div class="c" style="left:102px;width:109px"><span class="nn">5_2</span><span class="mm">م</span></div>
<div class="c" style="left:213px;width:108px">Numeric</div>
<div class="c" style="left:323px;width:83px">26</div>
<div class="c" style="left:408px;width:83px">0</div>
<div class="c" style="left:493px;width:133px"><span class="rtl"><span class="ar">يدعم التواصل الفعّال داخ</span>...</span></div>
<div class="c" style="left:628px;width:108px"><span class="rtl vv">{1, <span class="ar">غير موافق بش</span>...</span></div>
<div class="c" style="left:738px;width:108px">None</div>
<div class="c" style="left:848px;width:83px">26</div>
<div class="c" style="left:933px;width:120px"><svg class="ic al" width="20" height="19.5" viewBox="0 0 20 19.5"><use href="#i-al"/></svg><span class="t2">Right</span></div>
<div class="c" style="left:1055px;width:133px"><svg class="ic ms" width="22" height="20" viewBox="0 0 22 20"><use href="#i-ordinal"/></svg><span class="t3">Ordinal</span></div>
<div class="c" style="left:1190px;width:108px"><svg class="ic rl" width="18" height="16" viewBox="0 0 18 16"><use href="#i-in"/></svg><span class="t4">Input</span></div>
</div>
<div class="row" style="top:700px;height:27px">
<div class="rh" style="height:24px;line-height:25px">22</div>
<div class="c" style="left:102px;width:109px"><span class="nn">6_2</span><span class="mm">م</span></div>
<div class="c" style="left:213px;width:108px">Numeric</div>
<div class="c" style="left:323px;width:83px">26</div>
<div class="c" style="left:408px;width:83px">0</div>
<div class="c" style="left:493px;width:133px"><span class="rtl"><span class="ar">يمارس القائد سلوكيات إي</span>...</span></div>
<div class="c" style="left:628px;width:108px"><span class="rtl vv">{1, <span class="ar">غير موافق بش</span>...</span></div>
<div class="c" style="left:738px;width:108px">None</div>
<div class="c" style="left:848px;width:83px">26</div>
<div class="c" style="left:933px;width:120px"><svg class="ic al" width="20" height="19.5" viewBox="0 0 20 19.5"><use href="#i-al"/></svg><span class="t2">Right</span></div>
<div class="c" style="left:1055px;width:133px"><svg class="ic ms" width="22" height="20" viewBox="0 0 22 20"><use href="#i-ordinal"/></svg><span class="t3">Ordinal</span></div>
<div class="c" style="left:1190px;width:108px"><svg class="ic rl" width="18" height="16" viewBox="0 0 18 16"><use href="#i-in"/></svg><span class="t4">Input</span></div>
</div>
<div class="row" style="top:727px;height:27px">
<div class="rh" style="height:24px;line-height:25px">23</div>
<div class="c" style="left:102px;width:109px"><span class="nn">7_2</span><span class="mm">م</span></div>
<div class="c" style="left:213px;width:108px">Numeric</div>
<div class="c" style="left:323px;width:83px">26</div>
<div class="c" style="left:408px;width:83px">0</div>
<div class="c" style="left:493px;width:133px"><span class="rtl"><span class="ar">يطبق القائد ما يطلبه من</span> ...</span></div>
<div class="c" style="left:628px;width:108px"><span class="rtl vv">{1, <span class="ar">غير موافق بش</span>...</span></div>
<div class="c" style="left:738px;width:108px">None</div>
<div class="c" style="left:848px;width:83px">26</div>
<div class="c" style="left:933px;width:120px"><svg class="ic al" width="20" height="19.5" viewBox="0 0 20 19.5"><use href="#i-al"/></svg><span class="t2">Right</span></div>
<div class="c" style="left:1055px;width:133px"><svg class="ic ms" width="22" height="20" viewBox="0 0 22 20"><use href="#i-ordinal"/></svg><span class="t3">Ordinal</span></div>
<div class="c" style="left:1190px;width:108px"><svg class="ic rl" width="18" height="16" viewBox="0 0 18 16"><use href="#i-in"/></svg><span class="t4">Input</span></div>
</div>
<div class="row" style="top:754px;height:28px">
<div class="rh" style="height:24px;line-height:25px">24</div>
<div class="c" style="left:102px;width:109px"><span class="nn">1_3</span><span class="mm">م</span></div>
<div class="c" style="left:213px;width:108px">Numeric</div>
<div class="c" style="left:323px;width:83px">26</div>
<div class="c" style="left:408px;width:83px">0</div>
<div class="c" style="left:493px;width:133px"><span class="rtl"><span class="ar">يمتلك القائد رؤية واضح</span>...</span></div>
<div class="c" style="left:628px;width:108px"><span class="rtl vv">{1, <span class="ar">غير موافق بش</span>...</span></div>
<div class="c" style="left:738px;width:108px">None</div>
<div class="c" style="left:848px;width:83px">26</div>
<div class="c" style="left:933px;width:120px"><svg class="ic al" width="20" height="19.5" viewBox="0 0 20 19.5"><use href="#i-al"/></svg><span class="t2">Right</span></div>
<div class="c" style="left:1055px;width:133px"><svg class="ic ms" width="22" height="20" viewBox="0 0 22 20"><use href="#i-ordinal"/></svg><span class="t3">Ordinal</span></div>
<div class="c" style="left:1190px;width:108px"><svg class="ic rl" width="18" height="16" viewBox="0 0 18 16"><use href="#i-in"/></svg><span class="t4">Input</span></div>
</div>
<div class="row" style="top:782px;height:28px">
<div class="rh" style="height:24px;line-height:25px">25</div>
<div class="c" style="left:102px;width:109px"><span class="nn">2_3</span><span class="mm">م</span></div>
<div class="c" style="left:213px;width:108px">Numeric</div>
<div class="c" style="left:323px;width:83px">26</div>
<div class="c" style="left:408px;width:83px">0</div>
<div class="c" style="left:493px;width:133px"><span class="rtl"><span class="ar">ينقل القائد رؤيته بطريقة</span> ...</span></div>
<div class="c" style="left:628px;width:108px"><span class="rtl vv">{1, <span class="ar">غير موافق بش</span>...</span></div>
<div class="c" style="left:738px;width:108px">None</div>
<div class="c" style="left:848px;width:83px">26</div>
<div class="c" style="left:933px;width:120px"><svg class="ic al" width="20" height="19.5" viewBox="0 0 20 19.5"><use href="#i-al"/></svg><span class="t2">Right</span></div>
<div class="c" style="left:1055px;width:133px"><svg class="ic ms" width="22" height="20" viewBox="0 0 22 20"><use href="#i-ordinal"/></svg><span class="t3">Ordinal</span></div>
<div class="c" style="left:1190px;width:108px"><svg class="ic rl" width="18" height="16" viewBox="0 0 18 16"><use href="#i-in"/></svg><span class="t4">Input</span></div>
</div>
<div class="row" style="top:810px;height:27px">
<div class="rh" style="height:24px;line-height:25px">26</div>
<div class="c" style="left:102px;width:109px"><span class="nn">3_3</span><span class="mm">م</span></div>
<div class="c" style="left:213px;width:108px">Numeric</div>
<div class="c" style="left:323px;width:83px">26</div>
<div class="c" style="left:408px;width:83px">0</div>
<div class="c" style="left:493px;width:133px"><span class="rtl"><span class="ar">تحرص الجمعية متابعة</span> ...</span></div>
<div class="c" style="left:628px;width:108px"><span class="rtl vv">{1, <span class="ar">غير موافق بش</span>...</span></div>
<div class="c" style="left:738px;width:108px">None</div>
<div class="c" style="left:848px;width:83px">26</div>
<div class="c" style="left:933px;width:120px"><svg class="ic al" width="20" height="19.5" viewBox="0 0 20 19.5"><use href="#i-al"/></svg><span class="t2">Right</span></div>
<div class="c" style="left:1055px;width:133px"><svg class="ic ms" width="22" height="20" viewBox="0 0 22 20"><use href="#i-ordinal"/></svg><span class="t3">Ordinal</span></div>
<div class="c" style="left:1190px;width:108px"><svg class="ic rl" width="18" height="16" viewBox="0 0 18 16"><use href="#i-in"/></svg><span class="t4">Input</span></div>
</div>
<div class="row" style="top:837px;height:27px">
<div class="rh" style="height:24px;line-height:25px">27</div>
<div class="c" style="left:102px;width:109px"><span class="nn">1_4</span><span class="mm">م</span></div>
<div class="c" style="left:213px;width:108px">Numeric</div>
<div class="c" style="left:323px;width:83px">26</div>
<div class="c" style="left:408px;width:83px">0</div>
<div class="c" style="left:493px;width:133px"><span class="rtl"><span class="ar">تساهم مجهودات الجمعية</span> ...</span></div>
<div class="c" style="left:628px;width:108px"><span class="rtl vv">{1, <span class="ar">غير موافق بش</span>...</span></div>
<div class="c" style="left:738px;width:108px">None</div>
<div class="c" style="left:848px;width:83px">26</div>
<div class="c" style="left:933px;width:120px"><svg class="ic al" width="20" height="19.5" viewBox="0 0 20 19.5"><use href="#i-al"/></svg><span class="t2">Right</span></div>
<div class="c" style="left:1055px;width:133px"><svg class="ic ms" width="22" height="20" viewBox="0 0 22 20"><use href="#i-ordinal"/></svg><span class="t3">Ordinal</span></div>
<div class="c" style="left:1190px;width:108px"><svg class="ic rl" width="18" height="16" viewBox="0 0 18 16"><use href="#i-in"/></svg><span class="t4">Input</span></div>
</div>
<div class="row" style="top:864px;height:28px">
<div class="rh" style="height:24px;line-height:25px">28</div>
<div class="c" style="left:102px;width:109px"><span class="nn">2_4</span><span class="mm">م</span></div>
<div class="c" style="left:213px;width:108px">Numeric</div>
<div class="c" style="left:323px;width:83px">26</div>
<div class="c" style="left:408px;width:83px">0</div>
<div class="c" style="left:493px;width:133px"><span class="rtl"><span class="ar">تتبنى الجمعية التحسينات</span> ...</span></div>
<div class="c" style="left:628px;width:108px"><span class="rtl vv">{1, <span class="ar">غير موافق بش</span>...</span></div>
<div class="c" style="left:738px;width:108px">None</div>
<div class="c" style="left:848px;width:83px">26</div>
<div class="c" style="left:933px;width:120px"><svg class="ic al" width="20" height="19.5" viewBox="0 0 20 19.5"><use href="#i-al"/></svg><span class="t2">Right</span></div>
<div class="c" style="left:1055px;width:133px"><svg class="ic ms" width="22" height="20" viewBox="0 0 22 20"><use href="#i-ordinal"/></svg><span class="t3">Ordinal</span></div>
<div class="c" style="left:1190px;width:108px"><svg class="ic rl" width="18" height="16" viewBox="0 0 18 16"><use href="#i-in"/></svg><span class="t4">Input</span></div>
</div>
<div class="row" style="top:892px;height:28px">
<div class="rh" style="height:24px;line-height:25px">29</div>
<div class="c" style="left:102px;width:109px"><span class="nn">3_4</span><span class="mm">م</span></div>
<div class="c" style="left:213px;width:108px">Numeric</div>
<div class="c" style="left:323px;width:83px">26</div>
<div class="c" style="left:408px;width:83px">0</div>
<div class="c" style="left:493px;width:133px"><span class="rtl"><span class="ar">تحرص الجمعية على التأ</span>...</span></div>
<div class="c" style="left:628px;width:108px"><span class="rtl vv">{1, <span class="ar">غير موافق بش</span>...</span></div>
<div class="c" style="left:738px;width:108px">None</div>
<div class="c" style="left:848px;width:83px">26</div>
<div class="c" style="left:933px;width:120px"><svg class="ic al" width="20" height="19.5" viewBox="0 0 20 19.5"><use href="#i-al"/></svg><span class="t2">Right</span></div>
<div class="c" style="left:1055px;width:133px"><svg class="ic ms" width="22" height="20" viewBox="0 0 22 20"><use href="#i-ordinal"/></svg><span class="t3">Ordinal</span></div>
<div class="c" style="left:1190px;width:108px"><svg class="ic rl" width="18" height="16" viewBox="0 0 18 16"><use href="#i-in"/></svg><span class="t4">Input</span></div>
</div>
<div class="hl" style="top:149.0px"></div>
<div class="hl" style="top:176.5px"></div>
<div class="hl" style="top:204.0px"></div>
<div class="hl" style="top:231.5px"></div>
<div class="hl" style="top:259.0px"></div>
<div class="hl" style="top:286.5px"></div>
<div class="hl" style="top:314.0px"></div>
<div class="hl" style="top:341.5px"></div>
<div class="hl" style="top:369.0px"></div>
<div class="hl" style="top:396.5px"></div>
<div class="hl" style="top:424.0px"></div>
<div class="hl" style="top:451.5px"></div>
<div class="hl" style="top:479.0px"></div>
<div class="hl" style="top:506.5px"></div>
<div class="hl" style="top:534.0px"></div>
<div class="hl" style="top:561.5px"></div>
<div class="hl" style="top:589.0px"></div>
<div class="hl" style="top:616.5px"></div>
<div class="hl" style="top:644.0px"></div>
<div class="hl" style="top:671.5px"></div>
<div class="hl" style="top:699.0px"></div>
<div class="hl" style="top:726.5px"></div>
<div class="hl" style="top:754.0px"></div>
<div class="hl" style="top:781.5px"></div>
<div class="hl" style="top:809.0px"></div>
<div class="hl" style="top:836.5px"></div>
<div class="hl" style="top:864.0px"></div>
<div class="hl" style="top:891.5px"></div>
<div class="hl" style="top:919.0px"></div>
<div class="vl" style="left:101.5px;top:123px;height:792px;background:#d3e2f5"></div>
<div class="vl" style="left:211.5px"></div>
<div class="vl" style="left:321.5px"></div>
<div class="vl" style="left:406.5px"></div>
<div class="vl" style="left:491.5px"></div>
<div class="vl" style="left:626.5px"></div>
<div class="vl" style="left:736.5px"></div>
<div class="vl" style="left:846.5px"></div>
<div class="vl" style="left:931.5px"></div>
<div class="vl" style="left:1053.5px"></div>
<div class="vl" style="left:1188.5px"></div>
<div class="vl" style="left:1298.5px"></div>
<div id="hsrow"></div>
<div id="hstrack"></div>
<div id="hsbtn"><svg width="17" height="16" viewBox="0 0 17 16" style="position:absolute;left:0;top:0"><path d="M11 3.5V12.5L5 8z" fill="#444"/></svg></div>
<div id="bl1"></div><div id="bl2"></div>
<div id="bottom"></div>
<div id="wmc"><div id="wm">خمسات</div></div>
<div id="tab1">Data View</div>
<div id="tab2">Variable View</div>
</body>
</html>
